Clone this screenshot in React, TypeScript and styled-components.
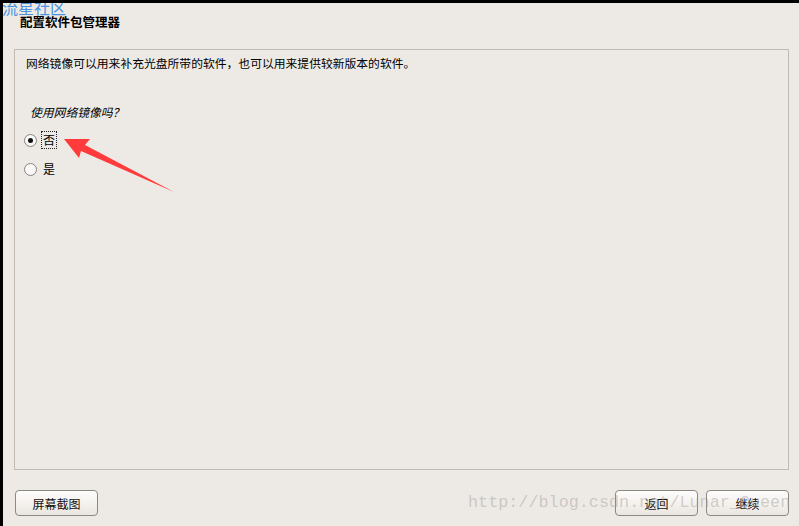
import React from "react";
import styled, { createGlobalStyle } from "styled-components";

const Global = createGlobalStyle`
  html, body { margin: 0; padding: 0; background: #edeae5; }
  body { font-family: "Noto Sans CJK SC", "DejaVu Sans", sans-serif; }
`;

const Window = styled.div`
  position: relative;
  width: 799px;
  height: 526px;
  box-sizing: border-box;
  border-top: 3px solid #000;
  border-left: 3px solid #000;
  background: #edeae5;
  display: flex;
  flex-direction: column;
  padding: 0 10px 0 11px;
  overflow: hidden;
  color: #000;
`;

const Title = styled.div`
  margin: 11px 0 0 6px;
  height: 16px;
  line-height: 16px;
  font-size: 12.5px;
  font-weight: 700;
`;

const Panel = styled.div`
  margin-top: 19px;
  height: 421px;
  box-sizing: border-box;
  border: 1px solid #c1bab0;
  padding: 5px 9px 0 10px;
  display: flex;
  flex-direction: column;
`;

const Text = styled.div<{ $italic?: boolean; $indent?: number; $top?: number }>`
  font-size: 11.8px;
  line-height: 16px;
  height: 16px;
  font-style: ${(p) => (p.$italic ? "italic" : "normal")};
  margin-left: ${(p) => p.$indent ?? 0}px;
  margin-top: ${(p) => p.$top ?? 0}px;
`;

const RadioList = styled.div`
  margin-top: 11px;
  display: flex;
  flex-direction: column;
  gap: 11px;
`;

const RadioRow = styled.div`
  display: flex;
  align-items: center;
  height: 18px;
  margin-left: -1px;
`;

const Circle = styled.span<{ $checked?: boolean }>`
  width: 11px;
  height: 11px;
  border-radius: 50%;
  border: 1px solid #8b8580;
  background: radial-gradient(circle at 50% 40%, #ffffff 0%, #f3f1ee 100%);
  display: flex;
  align-items: center;
  justify-content: center;
  flex-shrink: 0;
  &::after {
    content: "";
    display: ${(p) => (p.$checked ? "block" : "none")};
    width: 5px;
    height: 5px;
    border-radius: 50%;
    background: #111;
  }
`;

const Label = styled.span<{ $focus?: boolean }>`
  margin-left: ${(p) => (p.$focus ? 4 : 6)}px;
  font-size: 12px;
  line-height: 14px;
  padding: ${(p) => (p.$focus ? "1px 1px" : "0")};
  border: ${(p) => (p.$focus ? "1px dotted #222" : "none")};
`;

const Footer = styled.div`
  margin-top: 20px;
  display: flex;
  align-items: center;
  padding-left: 1px;
`;

const Spacer = styled.div`
  flex: 1;
`;

const Button = styled.button`
  width: 83px;
  height: 26px;
  box-sizing: border-box;
  border: 1px solid #8d8882;
  border-radius: 4px;
  background: linear-gradient(#fefdfd, #f3efeb 60%, #e9e5e0);
  font-family: "Noto Sans CJK SC", sans-serif;
  font-size: 12px;
  color: #111;
  padding: 0;
  & + & {
    margin-left: 8px;
  }
`;

const SiteMark = styled.div`
  position: absolute;
  left: -1px;
  top: -5px;
  font-size: 16px;
  line-height: 18px;
  color: #4b93df;
  font-family: "Noto Sans CJK SC", sans-serif;
  letter-spacing: 0px;
`;

const UrlMark = styled.div`
  position: absolute;
  left: 465px;
  top: 490px;
  font-family: "Liberation Mono", monospace;
  font-size: 16.8px;
  line-height: 20px;
  color: rgba(160, 155, 150, 0.45);
  pointer-events: none;
  white-space: nowrap;
`;

const Arrow = styled.svg`
  position: absolute;
  left: -3px;
  top: -3px;
  pointer-events: none;
`;

export default function App() {
  return (
    <>
      <Global />
      <Window>
        <SiteMark>流星社区</SiteMark>
        <Title>配置软件包管理器</Title>
        <Panel>
          <Text $indent={1}>网络镜像可以用来补充光盘所带的软件，也可以用来提供较新版本的软件。</Text>
          <Text $italic $indent={5} $top={33}>使用网络镜像吗？</Text>
          <RadioList>
            <RadioRow>
              <Circle $checked />
              <Label $focus>否</Label>
            </RadioRow>
            <RadioRow>
              <Circle />
              <Label>是</Label>
            </RadioRow>
          </RadioList>
        </Panel>
        <Footer>
          <Button>屏幕截图</Button>
          <Spacer />
          <Button>返回</Button>
          <Button>继续</Button>
        </Footer>
        <UrlMark>http://blog.csdn.net/Lunar_Queen</UrlMark>
        <Arrow width="200" height="200" viewBox="0 0 200 200">
          <polygon
            points="64,139 90,139 85,145 174,192 81,151 79,158"
            fill="#ff3b3b"
          />
        </Arrow>
      </Window>
    </>
  );
}
